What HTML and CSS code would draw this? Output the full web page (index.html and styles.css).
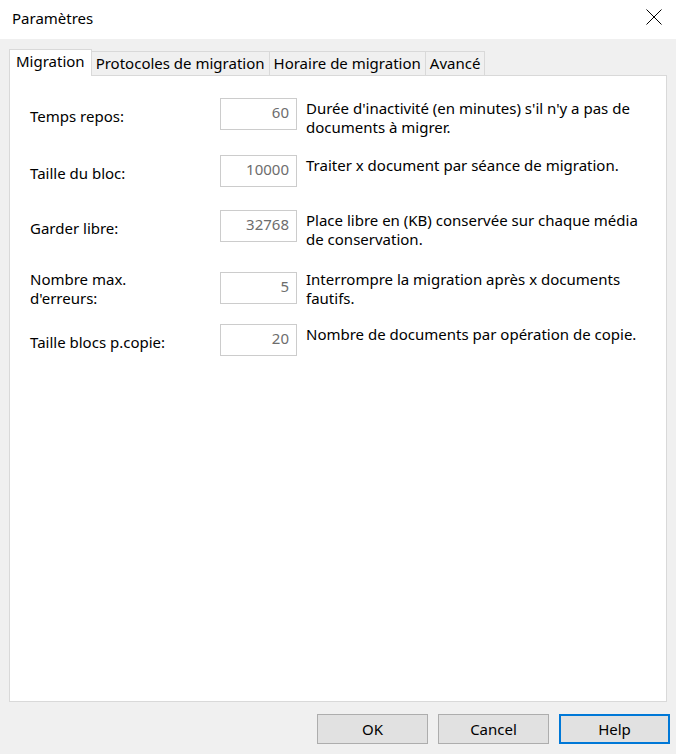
FILE: index.html
```html
<!DOCTYPE html>
<html lang="fr">
<head>
<meta charset="utf-8">
<title>Paramètres</title>
<link rel="stylesheet" href="styles.css">
</head>
<body>
<div class="window">
  <div class="titlebar">
    <span class="title">Paramètres</span>
    <svg class="close" width="16" height="16" viewBox="0 0 16 16" aria-hidden="true">
      <path d="M0.5 0.5 L15.5 15.5 M15.5 0.5 L0.5 15.5" stroke="#000" stroke-width="1" fill="none"/>
    </svg>
  </div>
  <div class="body">
    <div class="tabs">
      <div class="tab active">Migration</div>
      <div class="tab">Protocoles de migration</div>
      <div class="tab">Horaire de migration</div>
      <div class="tab">Avancé</div>
    </div>
    <div class="panel">
      <div class="row r1">
        <div class="label">Temps repos:</div>
        <div class="field">60</div>
        <div class="desc">Durée d'inactivité (en minutes) s'il n'y a pas de documents à migrer.</div>
      </div>
      <div class="row r2">
        <div class="label">Taille du bloc:</div>
        <div class="field">10000</div>
        <div class="desc">Traiter x document par séance de migration.</div>
      </div>
      <div class="row r3">
        <div class="label">Garder libre:</div>
        <div class="field">32768</div>
        <div class="desc">Place libre en (KB) conservée sur chaque média de conservation.</div>
      </div>
      <div class="row r4">
        <div class="label two">Nombre max.<br>d'erreurs:</div>
        <div class="field">5</div>
        <div class="desc up">Interrompre la migration après x documents fautifs.</div>
      </div>
      <div class="row r5">
        <div class="label">Taille blocs p.copie:</div>
        <div class="field">20</div>
        <div class="desc">Nombre de documents par opération de copie.</div>
      </div>
    </div>
    <div class="buttons">
      <button class="btn">OK</button>
      <button class="btn">Cancel</button>
      <button class="btn default">Help</button>
    </div>
  </div>
</div>
</body>
</html>
```
FILE: styles.css
```css
html, body {
  margin: 0;
  padding: 0;
}
body {
  width: 676px;
  height: 754px;
  background: #f0f0f0;
  font-family: "Noto Sans", "Open Sans", sans-serif;
  font-size: 15px;
  color: #000;
  overflow: hidden;
}
.window {
  display: flex;
  flex-direction: column;
  height: 754px;
}
.titlebar {
  height: 39px;
  background: #fff;
  display: flex;
  align-items: center;
  justify-content: space-between;
  padding: 0 14px 0 12px;
  box-sizing: border-box;
}
.title {
  font-size: 15px;
  line-height: 20px;
  margin-top: -3px;
}
.close {
  display: block;
  margin-top: -6px;
}
.body {
  padding: 10px 9px 0 9px;
  display: flex;
  flex-direction: column;
}
.tabs {
  display: flex;
  align-items: flex-end;
  height: 26px;
}
.tab {
  height: 24px;
  box-sizing: border-box;
  border: 1px solid #d9d9d9;
  border-bottom: none;
  background: #f0f0f0;
  padding: 0 4px;
  line-height: 22px;
  margin-left: -1px;
  white-space: nowrap;
}
.tab.active {
  height: 27px;
  background: #fff;
  margin-left: 0;
  margin-bottom: -1px;
  padding: 0 6px;
  line-height: 22px;
  position: relative;
  z-index: 1;
}
.panel {
  height: 627px;
  box-sizing: border-box;
  border: 1px solid #d9d9d9;
  background: #fff;
  padding: 22px 0 0 20px;
  display: flex;
  flex-direction: column;
}
.row {
  display: flex;
  align-items: flex-start;
  height: 32px;
  flex: none;
}
.r2 { margin-top: 25px; }
.r3 { margin-top: 23px; }
.r4 { margin-top: 30px; }
.r5 { margin-top: 20px; }
.label {
  width: 190px;
  flex: none;
  line-height: 19px;
  align-self: center;
  padding-top: 4px;
}
.label.two {
  padding-top: 1px;
}
.field {
  width: 77px;
  height: 32px;
  flex: none;
  box-sizing: border-box;
  border: 1px solid #cccccc;
  background: #fff;
  color: #6d6d6d;
  text-align: right;
  padding-right: 7px;
  line-height: 27px;
}
.desc {
  margin-left: 9px;
  width: 345px;
  line-height: 19px;
  padding-top: 1px;
}
.desc.up {
  padding-top: 0;
  margin-top: -2px;
}
.buttons {
  display: flex;
  justify-content: flex-end;
  gap: 10px;
  padding-top: 12px;
  margin-right: -3px;
}
.btn {
  width: 111px;
  height: 30px;
  box-sizing: border-box;
  border: 1px solid #adadad;
  background: #e1e1e1;
  font-family: "Noto Sans", "Open Sans", sans-serif;
  font-size: 15px;
  color: #000;
  padding: 0;
  line-height: 26px;
}
.btn.default {
  border: 2px solid #0078d7;
}
```
